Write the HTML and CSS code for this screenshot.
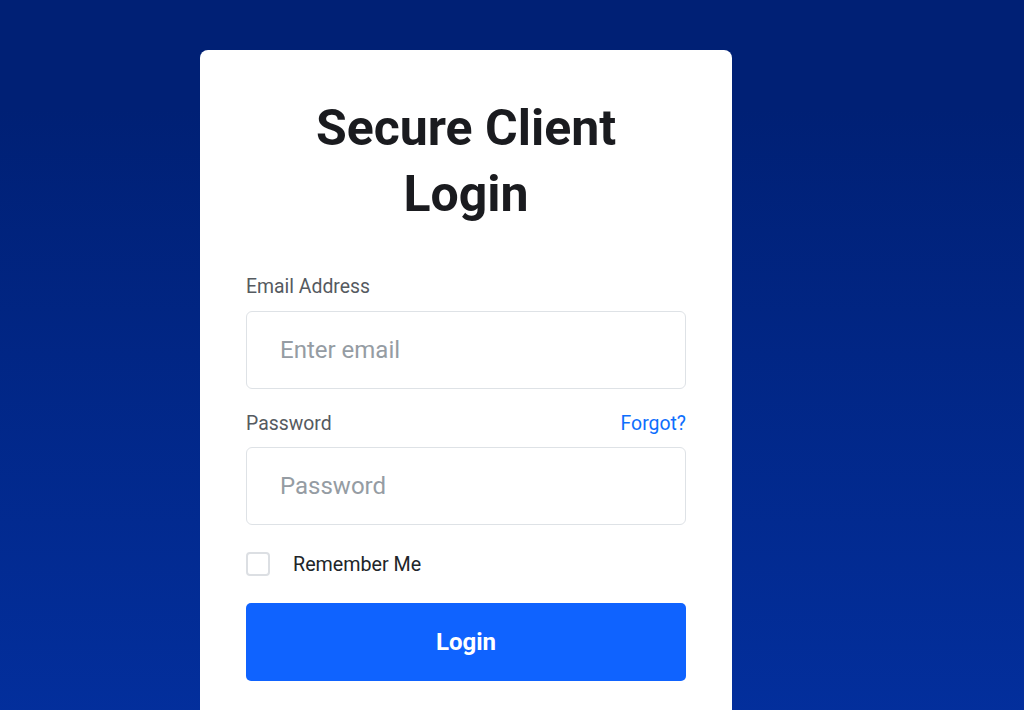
FILE: index.html
```html
<!DOCTYPE html>
<html lang="en">
<head>
    <meta charset="UTF-8">
    <meta name="viewport" content="width=device-width, initial-scale=1.0">
    <title>Secure Client Login</title>
    <link rel="stylesheet" href="styles.css">
</head>
<body>
    <div class="page">
        <div class="login-card">
            <h1>Secure Client Login</h1>
            <form class="login-form">
                <div class="field">
                    <label class="field-label" for="email">Email Address</label>
                    <input class="field-input" type="email" id="email" placeholder="Enter email">
                </div>
                <div class="field">
                    <div class="label-row">
                        <label class="field-label" for="password">Password</label>
                        <a class="forgot" href="#">Forgot?</a>
                    </div>
                    <input class="field-input" type="password" id="password" placeholder="Password">
                </div>
                <div class="remember">
                    <span class="checkbox"></span>
                    <span class="remember-text">Remember Me</span>
                </div>
                <button class="login-btn" type="button">Login</button>
            </form>
        </div>
    </div>
</body>
</html>
```

FILE: styles.css
```css
* {
    box-sizing: border-box;
}

body {
    margin: 0;
    min-height: 100vh;
    background: linear-gradient(180deg, #002075 0%, #002075 14%, #0330a0 100%);
    font-family: Roboto, 'Liberation Sans', sans-serif;
    overflow: hidden;
}

.page {
    padding: 50px 0 0 200px;
}

.login-card {
    width: 532px;
    min-height: 720px;
    background: #ffffff;
    border-radius: 8px;
    padding: 45px 46px;
}

h1 {
    margin: 0 0 46px;
    padding: 0 30px;
    text-align: center;
    font-size: 50px;
    line-height: 66px;
    font-weight: 700;
    color: #1a1b1f;
}

.field {
    margin-bottom: 21px;
}

.label-row {
    display: flex;
    justify-content: space-between;
    align-items: baseline;
    margin-bottom: 8px;
}

.field-label {
    display: block;
    font-size: 19.4px;
    line-height: 28.8px;
    color: #555a60;
    margin-bottom: 9.5px;
}

.label-row .field-label {
    margin-bottom: 0;
}

.forgot {
    font-size: 19.4px;
    line-height: 28.8px;
    color: #0d6efd;
    text-decoration: none;
}

.field-input {
    display: block;
    width: 100%;
    height: 78px;
    padding: 20px 33px;
    font-family: inherit;
    font-size: 24px;
    line-height: 36px;
    color: #212529;
    border: 1px solid #dee2e6;
    border-radius: 6px;
    outline: none;
}

.field-input::placeholder {
    color: #959ca3;
}

.remember {
    display: flex;
    align-items: center;
    gap: 23px;
    margin: 27px 0;
}

.checkbox {
    width: 24px;
    height: 24px;
    border: 2px solid #dcdfe3;
    border-radius: 4px;
}

.remember-text {
    font-size: 19.7px;
    color: #212529;
}

.login-btn {
    display: block;
    width: 100%;
    height: 78px;
    border: none;
    border-radius: 5px;
    background: #0f63ff;
    color: #ffffff;
    font-family: inherit;
    font-size: 24px;
    font-weight: 700;
}
```
